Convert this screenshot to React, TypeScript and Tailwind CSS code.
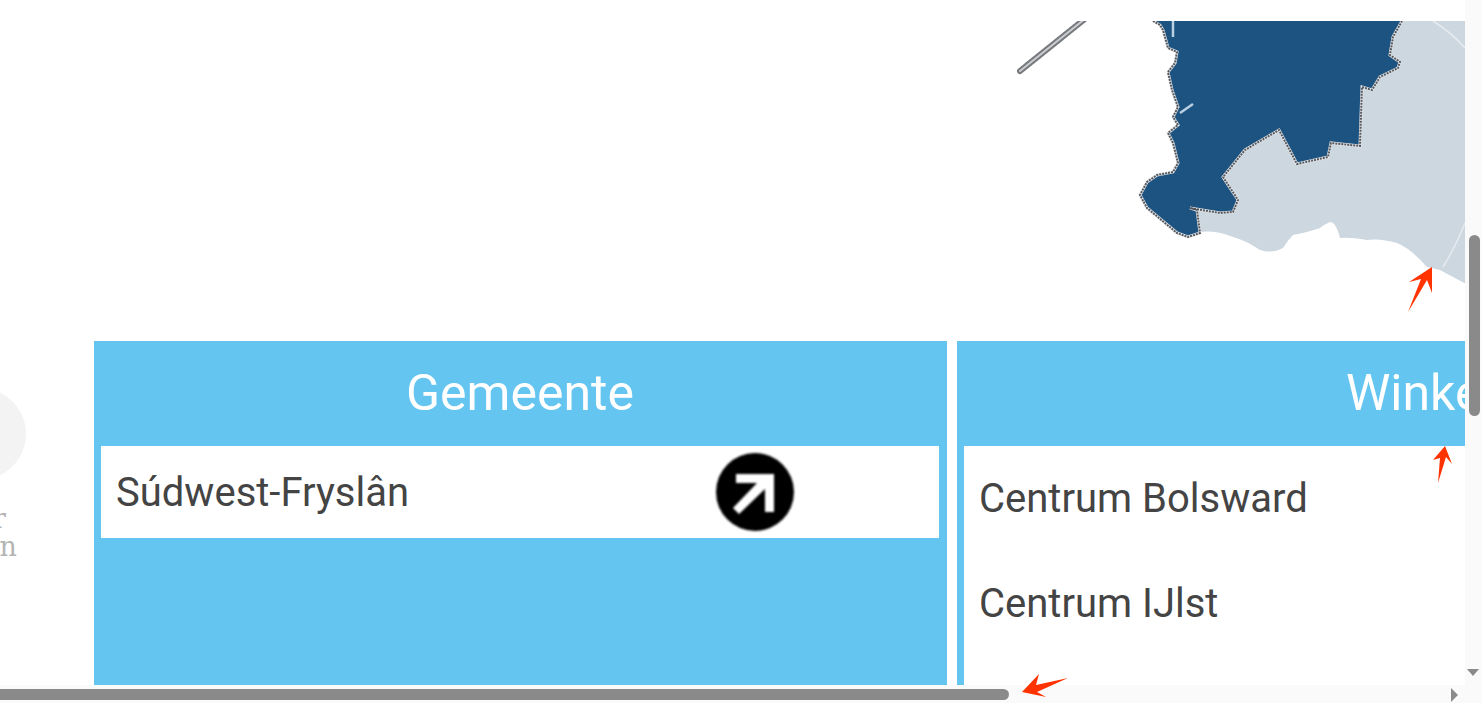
import React from "react";

const winkels = ["Centrum Bolsward", "Centrum IJlst"];

const outline =
  "M1153 21L1160 25L1163 30L1168 48L1177 52L1175 63L1168 72L1172 90L1178 107L1173 117L1178 125L1168 133L1173 143L1178 163L1173 172L1157 175L1147 182L1140 195L1147 208L1177 233L1188 237L1200 233L1197 210L1190 208L1220 213L1233 212L1238 200L1223 177L1245 150L1279 130L1297 164L1328 157L1331 143L1360 146L1362 87L1372 90L1380 77L1398 68L1400 62L1390 55L1393 37L1402 21";

function MapShape() {
  return (
    <svg className="block w-[1465px] h-[341px]" viewBox="0 0 1465 341" xmlns="http://www.w3.org/2000/svg">
      <defs>
        <clipPath id="mapClip">
          <rect x="0" y="21" width="1465" height="320" />
        </clipPath>
      </defs>
      <g clipPath="url(#mapClip)">
        <g className="blur-[0.5px]">
          {/* light region around the municipality */}
          <path
            d="M1300 15H1470V286L1440 270L1427 267Q1410 248 1397 243Q1380 238 1367 240Q1350 237 1340 238Q1336 222 1330 222Q1325 224 1320 228Q1305 233 1293 235Q1288 240 1283 248Q1272 254 1260 250Q1245 240 1233 237Q1215 230 1200 232L1190 208Z"
            fill="#cdd7e0"
          />
          <path d="M1433 21Q1452 33 1465 48M1465 223Q1455 248 1443 267" fill="none" stroke="#e6ebf0" strokeWidth="1.5" />
          {/* municipality */}
          <path d={outline + "Z"} fill="#1c5380" />
          <path d={outline} fill="none" stroke="#e4e8ec" strokeWidth="3" />
          <path d={outline} fill="none" stroke="#55595e" strokeWidth="2" strokeDasharray="2 1" />
          <path d="M1173 21V37M1180 113L1193 104" fill="none" stroke="#b9cfe2" strokeWidth="2.5" />
          {/* island */}
          <path d="M1086 18L1020 71" fill="none" stroke="#77797c" strokeWidth="6" strokeLinecap="round" strokeDasharray="3 1" />
          <path d="M1086 18L1020 71" fill="none" stroke="#c9ccd0" strokeWidth="2" strokeLinecap="round" />
        </g>
      </g>
    </svg>
  );
}

function GoIcon() {
  return (
    <svg className="w-[80px] h-[80px] shrink-0 blur-[0.8px]" viewBox="0 0 80 80" xmlns="http://www.w3.org/2000/svg">
      <circle cx="40" cy="40" r="39" fill="#000" />
      <path d="M21 22H59V60H50V37L24 62L18 56L42 31H21Z" fill="#fff" />
    </svg>
  );
}

function RedArrows() {
  return (
    <svg
      className="absolute inset-0 w-[1482px] h-[703px] pointer-events-none"
      viewBox="0 0 1482 703"
      xmlns="http://www.w3.org/2000/svg"
    >
      <path d="M1432 267L1409 282L1421 279L1408 312L1427 280L1432 293Z" fill="#ff3300" />
      <path d="M1445 446L1433 460L1440 458L1438 483L1446 457L1452 464Z" fill="#ff3300" />
      <path d="M1022 692L1039 674L1036 685L1068 678L1037 692L1046 697Z" fill="#ff3300" />
    </svg>
  );
}

export default function App() {
  return (
    <div className="relative flex flex-col w-[1482px] h-[703px] overflow-hidden bg-white font-['Roboto',sans-serif]">
      <div className="flex h-[685px]">
        <div className="w-[1465px] overflow-hidden">
          <MapShape />
          <div className="flex h-[344px]">
            {/* left, cut off by the scroll position */}
            <div className="w-[94px] shrink-0 pt-[47px] overflow-hidden">
              <div className="w-[92px] h-[92px] -ml-[66px] rounded-full bg-[#f3f3f3]" />
              <div className="mt-[25px] font-['DejaVu_Serif',serif] text-[27px] leading-[28px] text-[#b4b4b4]">
                <div className="w-[6px] flex justify-end whitespace-nowrap">r</div>
                <div className="w-[17px] flex justify-end whitespace-nowrap">n</div>
              </div>
            </div>

            <div className="w-[853px] shrink-0 bg-[#65c5f1] pl-[7px] pr-[8px]">
              <h2 className="h-[105px] flex items-center justify-center text-[50px] text-white">Gemeente</h2>
              <div className="h-[92px] flex items-center bg-white pl-[15px] pr-4">
                <span className="w-[599px] shrink-0 pt-px text-[40px] text-[#444]">Súdwest-Fryslân</span>
                <GoIcon />
              </div>
            </div>

            <div className="w-[1068px] shrink-0 ml-[10px] bg-[#65c5f1] pl-[7px]">
              <h2 className="h-[105px] flex items-center justify-center text-[50px] text-white">Winkelgebied</h2>
              <div className="h-[239px] bg-white">
                {winkels.map((name) => (
                  <div key={name} className="h-[105px] flex items-center px-[15px] text-[40px] text-[#444]">
                    {name}
                  </div>
                ))}
              </div>
            </div>
          </div>
        </div>

        {/* vertical scrollbar */}
        <div className="relative w-[17px] bg-[#fafafa] pt-[235px] pl-[4px]">
          <div className="w-[11px] h-[181px] rounded-full bg-[#8a8a8a]" />
          <div className="absolute left-[2px] top-[669px] w-0 h-0 border-x-[6px] border-x-transparent border-t-[7px] border-t-[#8a8a8a]" />
        </div>
      </div>

      {/* horizontal scrollbar */}
      <div className="relative h-[18px] bg-[#fafafa] pt-[4px]">
        <div className="w-[1009px] h-[11px] rounded-r-full bg-[#8a8a8a]" />
        <div className="absolute left-[1451px] top-[3px] w-0 h-0 border-y-[7px] border-y-transparent border-l-[7px] border-l-[#8a8a8a]" />
      </div>

      <RedArrows />
    </div>
  );
}
